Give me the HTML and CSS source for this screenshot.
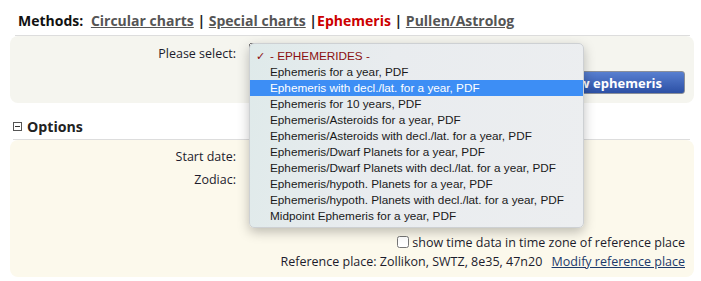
FILE: index.html
```html
<!DOCTYPE html>
<html lang="en">
<head>
  <meta charset="UTF-8">
  <title>Ephemeris</title>
  <link rel="stylesheet" href="styles.css">
</head>
<body>
  <div class="methods">
    <span class="methods-label">Methods:</span>
    <a href="#">Circular charts</a> | <a href="#">Special charts</a> |<span class="current">Ephemeris</span> | <a href="#">Pullen/Astrolog</a>
  </div>

  <div class="panel panel-select">
    <div class="form-row">
      <label class="form-label">Please select:</label>
      <div class="select-wrap">
        <select class="eph-select">
          <option>- EPHEMERIDES -</option>
        </select>
        <ul class="popup">
          <li class="popup-group"><span class="check">&#10003;</span>- EPHEMERIDES -</li>
          <li>Ephemeris for a year, PDF</li>
          <li class="active">Ephemeris with decl./lat. for a year, PDF</li>
          <li>Ephemeris for 10 years, PDF</li>
          <li>Ephemeris/Asteroids for a year, PDF</li>
          <li>Ephemeris/Asteroids with decl./lat. for a year, PDF</li>
          <li>Ephemeris/Dwarf Planets for a year, PDF</li>
          <li>Ephemeris/Dwarf Planets with decl./lat. for a year, PDF</li>
          <li>Ephemeris/hypoth. Planets for a year, PDF</li>
          <li>Ephemeris/hypoth. Planets with decl./lat. for a year, PDF</li>
          <li>Midpoint Ephemeris for a year, PDF</li>
        </ul>
      </div>
    </div>
    <div class="button-row">
      <button type="submit" class="show-btn">Show ephemeris</button>
    </div>
  </div>

  <div class="section-head">
    <span class="toggle"></span>Options
  </div>

  <div class="panel panel-options">
    <div class="form-row">
      <label class="form-label">Start date:</label>
      <div class="form-field"></div>
    </div>
    <div class="form-row">
      <label class="form-label">Zodiac:</label>
      <div class="form-field"></div>
    </div>
    <div class="check-row">
      <input type="checkbox" id="tzref">
      <label for="tzref">show time data in time zone of reference place</label>
    </div>
    <div class="ref-row">
      Reference place: Zollikon, SWTZ, 8e35, 47n20
      <a href="#">Modify reference place</a>
    </div>
  </div>
</body>
</html>
```

FILE: styles.css
```css
body {
  font-family: "Open Sans", Arial, sans-serif;
  font-size: 12.5px;
  color: #1c1c2c;
  background-color: #ffffff;
  margin: 0;
  padding: 0;
}

.methods {
  margin: 11px 11px 0 15px;
  padding: 0 0 4px 3px;
  height: 20px;
  line-height: 20px;
  font-size: 14px;
  font-weight: bold;
  color: #222;
  border-bottom: 1px solid #dddddd;
}

.methods-label {
  color: #111;
  margin-right: 4px;
}

.methods a {
  color: #555;
  text-decoration: underline;
}

.methods .current {
  color: #cc0000;
}

.panel {
  margin: 0 7px 0 10px;
  border-radius: 8px;
}

.panel-select {
  background-color: #f5f5ef;
  padding: 6px 9px 10px 0;
  height: 51px;
}

.panel-options {
  background-color: #fcf9ec;
  padding: 5px 9px 5px 0;
}

.form-row {
  display: grid;
  grid-template-columns: 226px 1fr;
  column-gap: 13px;
  height: 23px;
  align-items: center;
}

.form-label {
  text-align: right;
}

.select-wrap {
  position: relative;
}

.eph-select {
  width: 200px;
  height: 22px;
  font-family: "Liberation Sans", Arial, sans-serif;
  font-size: 12px;
}

.button-row {
  display: flex;
  justify-content: flex-end;
  margin-top: 6px;
}

.show-btn {
  height: 23px;
  padding: 0 22px 0 24px;
  font-family: "Open Sans", Arial, sans-serif;
  font-size: 13px;
  font-weight: bold;
  color: #ffffff;
  background: linear-gradient(#587fd0, #2c50a5);
  border: 1px solid #8a8f99;
  border-radius: 3px;
  cursor: pointer;
}

.popup {
  position: absolute;
  top: 0;
  left: 0;
  z-index: 10;
  width: 335px;
  height: 185px;
  margin: 0;
  padding: 4px 0 4px 0;
  list-style: none;
  font-family: "Liberation Sans", Arial, sans-serif;
  font-size: 11.75px;
  color: #1a1a1a;
  background: linear-gradient(100deg, #dfeaea 0%, #e9ecef 40%, #eceef0 100%);
  border: 1px solid #cdd0d3;
  border-radius: 5px;
  box-shadow: 0 4px 12px rgba(0, 0, 0, 0.25);
  box-sizing: border-box;
}

.popup li {
  height: 16px;
  line-height: 16px;
  padding-left: 20px;
  white-space: nowrap;
}

.popup .popup-group {
  position: relative;
  color: #8b1010;
}

.popup .check {
  position: absolute;
  left: 6px;
  font-size: 11px;
}

.popup .active {
  background-color: #3d8ef5;
  color: #ffffff;
}

.section-head {
  display: flex;
  align-items: center;
  margin: 13px 11px 0 13px;
  padding-bottom: 3px;
  height: 20px;
  font-size: 14.2px;
  font-weight: bold;
  color: #222;
  border-bottom: 1px solid #dddddd;
}

.toggle {
  position: relative;
  width: 7px;
  height: 7px;
  border: 1px solid #555;
  margin-right: 5px;
}

.toggle::after {
  content: "";
  position: absolute;
  left: 1px;
  right: 1px;
  top: 3px;
  height: 1px;
  background-color: #333;
}

.check-row {
  display: flex;
  justify-content: flex-end;
  align-items: center;
  height: 20px;
  margin-top: 41px;
}

.check-row input {
  margin: 0 3px 0 0;
  width: 12px;
  height: 12px;
}

.ref-row {
  text-align: right;
  height: 20px;
  line-height: 20px;
}

.ref-row a {
  color: #1d3a6b;
  margin-left: 6px;
}
```
